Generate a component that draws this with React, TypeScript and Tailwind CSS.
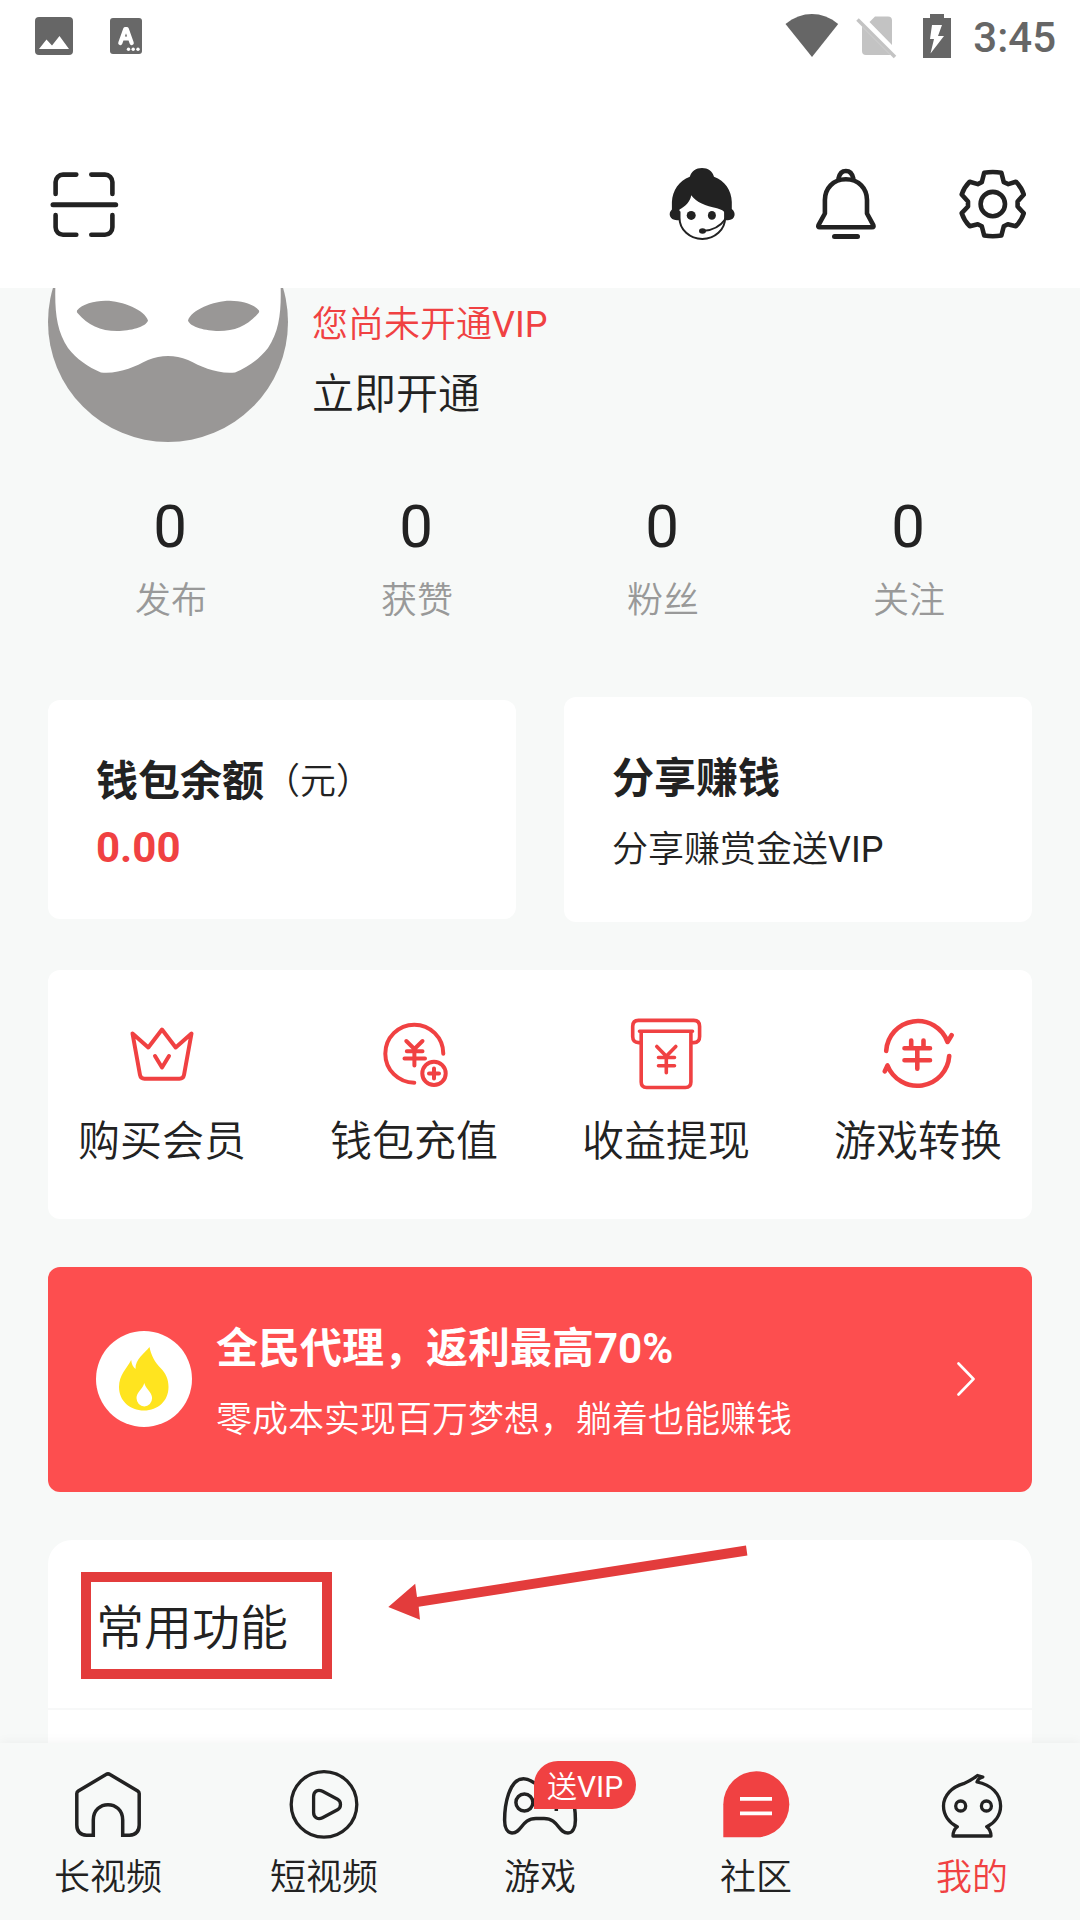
import React from "react";

type IconProps = { children: React.ReactNode; color?: string; width?: number };

// Shared 72px line-icon frame.
function LineIcon({ children, color = "#222222", width = 4 }: IconProps) {
  return (
    <svg className="block size-[72px] shrink-0" viewBox="0 0 72 72" fill="none" stroke={color} strokeWidth={width} strokeLinecap="round" strokeLinejoin="round">
      {children}
    </svg>
  );
}

const RED = "#f04142";

function StatusBar() {
  return (
    <div className="flex h-[72px] items-start bg-white text-[#666666]">
      <svg className="ml-[35px] mt-[17px] h-[38px] w-[38px]" viewBox="0 0 38 38">
        <rect width="38" height="38" rx="4" fill="#666666" />
        <path d="M4 32 11.500 22.500 17 28.500 24.500 19 34 32Z" fill="#ffffff" />
      </svg>
      <svg className="ml-[37px] mt-[18px] block h-[36px] w-[32px]" viewBox="0 0 32 36" fill="none" stroke="#ffffff" strokeWidth="4.200" strokeLinecap="round" strokeLinejoin="round">
        <rect width="32" height="36" rx="3" fill="#686868" stroke="none" />
        <path d="M10.300 25 15.300 11H16.700L21.700 25M12 20.500H20" />
        <g fill="#ffffff" stroke="none">
          <circle cx="18.500" cy="31.300" r="1.700" />
          <circle cx="23.200" cy="31.300" r="1.700" />
          <circle cx="28" cy="31.300" r="1.700" />
        </g>
      </svg>
      <div className="ml-auto flex items-start pr-[24px]">
        <svg className="mt-[14px] h-[44px] w-[54px]" viewBox="0 0 54 44">
          <path d="M0.500 10C17-3.300 37-3.300 53.200 10L27 43Z" fill="#666666" />
        </svg>
        <svg className="ml-[17px] mt-[15px] h-[44px] w-[42px]" viewBox="0 0 42 44">
          <path d="M13.500 7 19 1.400H32a4 4 0 0 1 4 4V30ZM6 11.500V36a4 4 0 0 0 4 4H34.500Z" fill="#c3c3c3" />
          <path d="M1.500 4.500 39 42" stroke="#c3c3c3" strokeWidth="3.600" />
        </svg>
        <svg className="ml-[25px] mt-[14px] h-[44px] w-[28px]" viewBox="0 0 28 44">
          <path d="M0 4H7V0H21V4H28V44H0Z" fill="#666666" />
          <path d="M9 11H19L15 22H21L7.500 39.500 11 25H7Z" fill="#ffffff" />
        </svg>
        <span className="ml-[22px] mt-[14px] text-[42px] font-medium leading-[48px]">3:45</span>
      </div>
    </div>
  );
}

function Header() {
  return (
    <header className="flex h-[216px] items-center bg-white pl-[48px] pr-[54px] pt-[48px]">
      <LineIcon width={4.6}>
        <path d="M5 36.700H67.700" strokeWidth="5" />
        <path d="M28.300 6.600H15a7.400 7.400 0 0 0-7.400 7.400V26M43.300 6.600H57a7.400 7.400 0 0 1 7.400 7.400V26M7.600 47V59.300a7.400 7.400 0 0 0 7.400 7.400H28.300M64.400 47V59.300a7.400 7.400 0 0 1-7.400 7.400H43.300" />
      </LineIcon>
      <div className="ml-auto flex gap-[72px]">
        <LineIcon width={2}>
          <path d="M13.500 44V50a22.800 21 0 0 0 45.600 0V43" />
          <path
            d="M23.800 8.700C25.500 3 30 0 36 0s10.500 3 12 8.700C59 13 65.500 22 65.800 34V41C70.500 44.500 69.500 52 62 52.300H60V46C58 43 55 41.300 51 40.300 39.500 37.800 30.500 34.500 25.200 27.200 24.500 33 19.500 38.500 13.500 41.500V52.300H11C3 51.800 2 45 5.900 41.500V34C6.500 22 13 13 23.800 8.700Z"
            fill="#222222" stroke="none"
          />
          <g fill="#222222" stroke="none">
            <ellipse cx="25.200" cy="47.400" rx="4.500" ry="4.500" />
            <ellipse cx="45.900" cy="47.400" rx="4" ry="4.300" />
            <ellipse cx="36.500" cy="63" rx="3.500" ry="2.800" />
          </g>
          <path d="M37 63C46 62.500 54.500 58 59.500 51" />
        </LineIcon>
        <LineIcon width={4.6}>
          <path d="M35.900 11.200C23 11.200 14.900 20.500 14.900 32V45.500L8.500 57.200Q7.600 59.300 9.800 59.300H62Q64.200 59.300 63.300 57.200L57 45.500V32C57 20.500 48.800 11.200 35.900 11.200Z" />
          <path d="M28.500 10.500C29.500 5.500 32.500 3 35.900 3s6.400 2.500 7.400 7.500" />
          <path d="M24.500 68.600H47.500" strokeWidth="5" />
        </LineIcon>
        <LineIcon width={4.6}>
          <path d="M30.200 4.700Q38.800 3.300 47.400 4.700L49.800 14.200 54.300 16.100 61.900 13.700Q67.500 19.500 69.800 26.500L63.600 33.500V38.500L69.800 45.200Q67.500 52.200 61.900 58.300L53.800 56.200 49.800 58.200 47.400 67.500Q38.800 68.900 30.200 67.500L27.800 58.200 23.800 56.200 15.700 58.300Q10 52.200 7.700 45.200L14 38.500V33.500L7.700 26.500Q10 19.500 15.700 13.700L23.800 16.100 27.800 14.200Z" />
          <circle cx="38.800" cy="36.100" r="12.200" />
        </LineIcon>
      </div>
    </header>
  );
}

function Profile() {
  return (
    <section className="flex">
      <svg className="block h-[154px] w-[240px]" viewBox="0 86 240 154">
        <circle cx="120" cy="120" r="120" fill="#999796" />
        <path d="M7.500 80C6.500 108 8 128 20 146 28.500 157 40 165 53 170.500 72 172 86 165 100 158Q120 150 140 158C154 165 168 172 187 170.500 200 165 211.500 157 220 146 232 128 233.500 108 232.500 80Z" fill="#ffffff" />
        <path id="eye" d="M29 108.500C34 102 46 99 57.400 98.700 74 98.500 97 108 100 118.500 98 125 82 129 69.300 129 52 129 40 123 29.500 111Q28.500 110 29 108.500Z" fill="#999796" />
        <use href="#eye" transform="translate(240 0) scale(-1 1)" />
      </svg>
      <div className="flex flex-col pl-[24px] pt-[10px]">
        <span className="text-[36px] leading-[54px] text-[#f04142]">您尚未开通<span className="font-normal">VIP</span></span>
        <span className="mt-[12px] text-[42px] leading-[62px]">立即开通</span>
      </div>
    </section>
  );
}

function Stats() {
  return (
    <section className="mt-[49px] grid grid-cols-4 text-center">
      {["发布", "获赞", "粉丝", "关注"].map((label) => (
        <div key={label} className="flex flex-col">
          <span className="pr-[2px] text-[60px] font-normal leading-[72px]">0</span>
          <span className="mt-[11px] text-[36px] leading-[54px] text-[#999999]">{label}</span>
        </div>
      ))}
    </section>
  );
}

function Wallet() {
  return (
    <section className="mt-[69px] flex items-center gap-[48px]">
      <div className="h-[219px] flex-1 rounded-[12px] bg-white pl-[48px] pt-[51px]">
        <div className="flex items-center text-[42px] font-bold leading-[62px]">
          钱包余额<span className="text-[36px] font-[350] leading-[54px]">（元）</span>
        </div>
        <div className="mt-[8px] text-[42px] font-bold leading-[54px] text-[#f04142]">0.00</div>
      </div>
      <div className="h-[225px] flex-1 rounded-[12px] bg-white pl-[48px] pt-[51px]">
        <div className="text-[42px] font-bold leading-[62px]">分享赚钱</div>
        <div className="mt-[13px] text-[36px] leading-[54px]">分享赚赏金送<span className="font-normal">VIP</span></div>
      </div>
    </section>
  );
}

const actions = [
  {
    label: "购买会员",
    icon: (
      <LineIcon color={RED}>
        <path d="M6.500 15.500 22.300 29.500 36 11.500 49.700 29.500 65.500 15.500 58 57Q57.300 60.700 53.500 60.700H18.500Q14.700 60.700 14 57Z" />
        <path d="M29 38 36 49.500 43 38" />
      </LineIcon>
    ),
  },
  {
    label: "钱包充值",
    icon: (
      <LineIcon color={RED}>
        <path d="M65.300 35.700A29 29 0 1 0 36.300 64.700" />
        <path d="M28.300 23 36.400 31 44.500 23M36.400 31V47.500M28.800 33.200H44.500M26.500 40.500H47" />
        <circle cx="56" cy="55.400" r="11.700" />
        <path d="M51 55.400H61M56 50.400V60.400" />
      </LineIcon>
    ),
  },
  {
    label: "收益提现",
    icon: (
      <LineIcon color={RED} width={3.6}>
        <path d="M10 24.600H8.500Q2.700 24.600 2.700 18.500V8.500Q2.700 2.400 8.500 2.400H63.800Q69.600 2.400 69.600 8.500V18.500Q69.600 24.600 63.800 24.600H62.500" />
        <path d="M9.500 13.300H62.500M11.200 13.300V64Q11.200 69.500 16.500 69.500H55.500Q60.900 69.500 60.900 64V13.300" />
        <path d="M26.800 28.500 36.300 38.300 45.800 28.500M36.300 38.300V54.800M28.500 39.500H44.500M28.500 47.700H44.500" />
      </LineIcon>
    ),
  },
  {
    label: "游戏转换",
    icon: (
      <LineIcon color={RED} width={4.6}>
        <path d="M4.200 33A31.600 31.600 0 0 1 65.500 24L69.600 17.200" />
        <path d="M67.200 38A32 32 0 0 1 5.500 47.500L2.800 53.300" />
        <path d="M29.200 22.500V30.200M41.500 22.500V30.200M35.300 30.200V50.800M22.500 30.200H48M22.500 42.200H48" />
      </LineIcon>
    ),
  },
];

function Actions() {
  return (
    <section className="mt-[48px] flex h-[249px] justify-between rounded-[12px] bg-white px-[30px] pt-[48px]">
      {actions.map((a) => (
        <div key={a.label} className="flex flex-col items-center">
          {a.icon}
          <span className="mt-[21px] text-[42px] leading-[62px]">{a.label}</span>
        </div>
      ))}
    </section>
  );
}

function Banner() {
  return (
    <section className="mt-[48px] flex h-[225px] items-center rounded-[12px] bg-[#fd4e4f] pl-[48px] pr-[57px] text-white">
      <div className="mb-px flex size-[96px] items-center justify-center rounded-full bg-white">
        <svg className="h-[66px] w-[52px]" viewBox="0 0 52 66">
          <path d="M31.500 1C27 7 17 13 17.500 23 15 21 13.500 18 13.200 14 9 22 1 29 1 41 1 55 12 64.500 26 64.500S50.500 55 50.500 41C50.500 33 47.500 27 43 22.500 36.500 16 33 9 31.500 1Z" fill="#ffe41f" />
          <path d="M26.300 37C25 43 18.500 46 18.500 52a7.800 8.500 0 0 0 15.600 0C34.100 46 27.500 43 26.300 37Z" fill="#ffffff" />
        </svg>
      </div>
      <div className="ml-[24px] flex flex-col pt-[5px]">
        <span className="text-[42px] font-bold leading-[62px]">全民代理，返利最高70%</span>
        <span className="mt-[13px] text-[36px] leading-[54px]">零成本实现百万梦想，躺着也能赚钱</span>
      </div>
      <svg className="mb-px ml-auto h-[34px] w-[18px]" viewBox="0 0 18 34" fill="none" stroke="#ffffff" strokeWidth="2.600" strokeLinecap="round" strokeLinejoin="round">
        <path d="M1.500 1.500 16.500 17 1.500 32.500" />
      </svg>
    </section>
  );
}

function Features() {
  return (
    <section className="relative mt-[48px] h-[204px] rounded-t-[24px] bg-white">
      <div className="flex h-[170px] items-center border-b-2 border-[#f7f8f8] px-[48px] pt-[10px] text-[48px] leading-[72px]">常用功能</div>
      <div className="absolute left-[33px] top-[32px] h-[107px] w-[251px] border-[10px] border-[#e33c3c]" />
      <svg className="absolute left-[340px] top-[5px] h-[76px] w-[360px]" viewBox="0 0 360 76">
        <path d="M0.300 62 27.200 38.800 29 52 358 0.500 359.400 10.500 30.700 61.700 32 74.800Z" fill="#e33c3c" />
      </svg>
    </section>
  );
}

const tabs = [
  {
    label: "长视频",
    icon: (
      <LineIcon width={3.5}>
        <path strokeLinecap="butt" strokeLinejoin="miter" d="M21.300 67.300H14.500Q4.800 66.500 4.800 57V25.500Q4.800 24 6.300 23L34 6.500Q36 5.200 38 6.500L65.700 23Q67.200 24 67.200 25.500V57Q67.200 66.500 57.500 67.300H50.700V52C50.700 31.500 21.300 31.500 21.300 52Z" />
      </LineIcon>
    ),
  },
  {
    label: "短视频",
    icon: (
      <LineIcon width={3.3}>
        <circle cx="36" cy="36.400" r="32.800" />
        <path d="M25.600 28.500C25.600 23 30 21 34.500 23.300L49.500 31.300C53.500 33.500 53.500 39.500 49.500 41.700L34.500 49.700C30 52 25.600 49.500 25.600 44.500Z" />
      </LineIcon>
    ),
  },
  {
    label: "游戏",
    badge: "送VIP",
    icon: (
      <svg className="block h-[72px] w-[76px] shrink-0" viewBox="-2 0 76 72" fill="none" stroke="#222222" strokeWidth="3.500" strokeLinejoin="round">
        <path d="M36 16.500C31 17.500 27.500 10.700 19.500 10.700 5 10.700 0.600 37 0.600 52 0.600 60 3.500 65 8 65 18 65 17.500 50.500 32 50.500H40C54.500 50.500 54 65 64 65 68.500 65 71.400 60 71.400 52 71.400 37 67 10.700 52.500 10.700 44.500 10.700 41 17.500 36 16.500Z" />
        <circle cx="20.400" cy="34.400" r="8.500" />
        <path d="M52.300 26V43M44.300 34H60.300" />
      </svg>
    ),
  },
  {
    label: "社区",
    icon: (
      <LineIcon width={3.7} color="#ffffff">
        <path d="M3.300 69.300V36.300A33 33 0 1 1 36.300 69.300Z" fill={RED} stroke="none" />
        <path strokeLinecap="butt" d="M20 30.800H52M20 45.300H52" />
      </LineIcon>
    ),
  },
  {
    label: "我的",
    active: true,
    icon: (
      <LineIcon width={3.3}>
        <path d="M27.500 15.700Q35 12.500 41.500 7.500L46.800 9Q42 10.500 41 14C55 16.500 64.600 26 64.600 38 64.600 47 59 55 50.700 58.700Q55 62 55 68H17Q17 62 21.300 58.700C13 55 7.500 47 7.500 38 7.500 27.500 16 19 27.500 15.700Z" />
        <circle cx="24.700" cy="38" r="5" />
        <circle cx="50.400" cy="38" r="5" />
      </LineIcon>
    ),
  },
];

function TabBar() {
  return (
    <nav className="relative grid h-[177px] grid-cols-5 bg-[#f7f9f8] pt-[25px] shadow-[0_-2px_10px_rgba(0,0,0,0.04)]">
      {tabs.map((t) => (
        <div key={t.label} className="flex flex-col items-center">
          <div className="relative">
            {t.icon}
            {t.badge && (
              <span className="absolute left-[32px] top-[-7px] flex h-[48px] w-[102px] items-center justify-center rounded-[24px] rounded-bl-none bg-[#f04142] pt-[3px] text-[30px] leading-none text-white">
                送<span className="font-normal">VIP</span>
              </span>
            )}
          </div>
          <span className={t.active ? "mt-[11px] text-[36px] leading-[54px] text-[#f04142]" : "mt-[11px] text-[36px] leading-[54px]"}>{t.label}</span>
        </div>
      ))}
    </nav>
  );
}

export default function App() {
  return (
    <div className="flex h-[1920px] w-[1080px] flex-col overflow-hidden bg-[#f7f9f8] font-[Roboto,'Noto_Sans_CJK_SC',sans-serif] font-[350] text-[#222222]">
      <StatusBar />
      <Header />
      <main className="h-[1455px] overflow-hidden px-[48px]">
        <Profile />
        <Stats />
        <Wallet />
        <Actions />
        <Banner />
        <Features />
      </main>
      <TabBar />
    </div>
  );
}
